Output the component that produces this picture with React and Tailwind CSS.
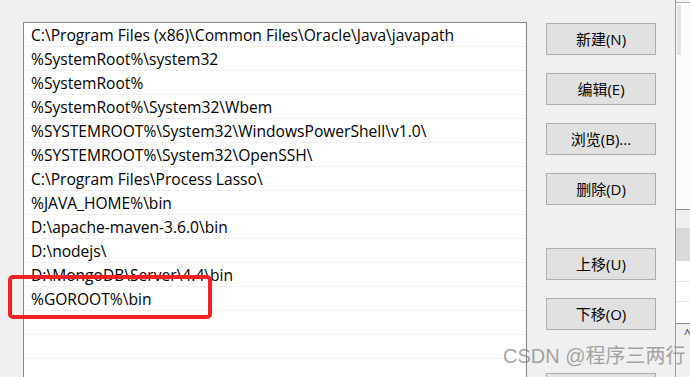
import React from "react";

const paths = [
    "C:\\Program Files (x86)\\Common Files\\Oracle\\Java\\javapath",
    "%SystemRoot%\\system32",
    "%SystemRoot%",
    "%SystemRoot%\\System32\\Wbem",
    "%SYSTEMROOT%\\System32\\WindowsPowerShell\\v1.0\\",
    "%SYSTEMROOT%\\System32\\OpenSSH\\",
    "C:\\Program Files\\Process Lasso\\",
    "%JAVA_HOME%\\bin",
    "D:\\apache-maven-3.6.0\\bin",
    "D:\\nodejs\\",
    "D:\\MongoDB\\Server\\4.4\\bin",
    "%GOROOT%\\bin",
    "",
    "",
    "",
    "",
];

const buttons = [
    { label: "新建(N)", mt: "mt-[23px]" },
    { label: "编辑(E)", mt: "mt-[18px]" },
    { label: "浏览(B)...", mt: "mt-[18px]" },
    { label: "删除(D)", mt: "mt-[18px]" },
    { label: "上移(U)", mt: "mt-[43px]" },
    { label: "下移(O)", mt: "mt-[18px]" },
    { label: "", mt: "mt-[43px]" },
];

const font = { fontFamily: '"Open Sans", "Noto Sans CJK SC", sans-serif' };

export default function App() {
    return (
        <div
            className="relative flex w-[690px] h-[377px] overflow-hidden bg-[#f0f0f0] text-black"
            style={font}
        >
            {/* Path list */}
            <div className="ml-[23px] mt-[22px] w-[504px] shrink-0 bg-white border-l border-t border-r border-[#828790]">
                {paths.map((p, i) => (
                    <div
                        key={i}
                        className="h-[24px] border-b border-[#f0f0f0] pl-[7px] pt-[3px] flex items-center text-[15.6px] leading-none whitespace-nowrap"
                    >
                        {p}
                    </div>
                ))}
            </div>

            {/* Buttons */}
            <div className="ml-[19px] w-[110px] shrink-0 flex flex-col">
                {buttons.map((b, i) => (
                    <div
                        key={i}
                        className={`${b.mt} h-[32px] shrink-0 bg-[#e1e1e1] border border-[#adadad] flex items-center justify-center pt-[1px] text-[15px]`}
                    >
                        {b.label}
                    </div>
                ))}
            </div>

            {/* Window behind, on the right */}
            <div className="ml-[19px] w-[15px] shrink-0 border-l border-[#9a9a9a] flex flex-col">
                <div className="h-[3px] bg-[#f5f5f5] border-b border-[#b0b0b0]" />
                <div className="h-[206px] bg-[#fbfbfb] flex">
                    <div className="ml-[1px] mt-[2px] w-[4px] h-[50px] bg-[#e3e3e3]" />
                </div>
                <div className="h-[19px] bg-[#f0f0f0] border-t border-[#8a8a8a]" />
                <div className="h-[33px] bg-[#d9d9d9]" />
                <div className="h-[21px] bg-white border-b border-[#e6e6e6]" />
                <div className="h-[20px] bg-white border-b border-[#e6e6e6]" />
                <div className="h-[22px] bg-white border-b border-[#8a8a8a]" />
                <div className="flex-1 bg-[#f0f0f0] flex">
                    <div className="ml-[4px] w-[1px] h-[20px] bg-[#d0d0d0]" />
                    <span className="ml-[4px] mt-[4px] text-[12px] leading-none text-[#333]">^</span>
                </div>
            </div>

            {/* Red highlight */}
            <div className="absolute left-[8px] top-[275px] w-[204px] h-[44px] border-[4px] border-[#f5211f] rounded-[5px]" />

            {/* Watermark */}
            <div
                className="absolute left-[503px] top-[346px] text-[20px] leading-none text-[#8c8c8c]/80 whitespace-nowrap"
                style={{ fontFamily: '"Liberation Sans", "Noto Sans CJK SC", sans-serif' }}
            >
                CSDN @程序三两行
            </div>
        </div>
    );
}
